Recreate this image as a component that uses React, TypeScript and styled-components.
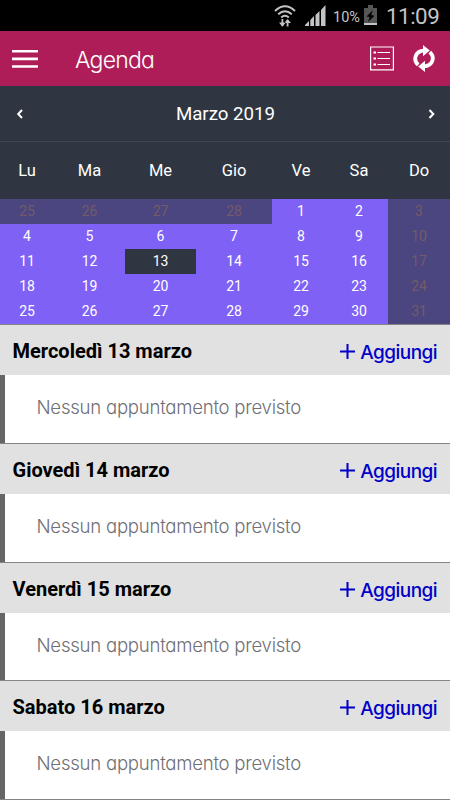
import React from "react";
import styled, { createGlobalStyle } from "styled-components";

const Global = createGlobalStyle`
  * { box-sizing: border-box; }
  body { margin: 0; background: #fff; font-family: Roboto, "Liberation Sans", sans-serif; }
`;

const rounded = `
  font-family: Inter, "Liberation Sans", sans-serif;
  font-feature-settings: "cv11" 1;
`;

const Screen = styled.main`
  width: 450px;
  height: 800px;
  overflow: hidden;
  display: flex;
  flex-direction: column;
`;

const StatusBar = styled.div`
  height: 31px;
  flex: none;
  background: #000;
  color: #c4c4c4;
  display: flex;
  justify-content: flex-end;
  align-items: center;
  padding-right: 10px;
  svg { display: block; flex: none; }
`;

const SignalGap = styled.span`
  margin: 0 0 0 9px;
`;

const Battery = styled.span`
  font-size: 14.5px;
  line-height: 31px;
  width: 27px;
  margin: 3px 4px 0 7px;
  white-space: nowrap;
`;

const Clock = styled.span`
  font-size: 22.4px;
  line-height: 31px;
  letter-spacing: -0.5px;
  width: 54px;
  margin: 2px 0 0 9px;
  white-space: nowrap;
`;

const Toolbar = styled.header`
  height: 55px;
  flex: none;
  background: #af1d58;
  color: #fff;
  display: flex;
  align-items: center;
  padding: 0 15px 0 12px;
`;

const IconButton = styled.button<{ $gap?: number }>`
  border: 0;
  padding: 0;
  background: none;
  color: inherit;
  display: block;
  margin-left: ${(p) => p.$gap ?? 0}px;
  svg { display: block; }
`;

const Title = styled.h1`
  ${rounded}
  flex: 1;
  margin: 3px 0 0 37px;
  font-size: 23px;
  line-height: 30px;
  font-weight: 300;
  letter-spacing: -0.8px;
`;

const MonthBar = styled.div`
  height: 56px;
  flex: none;
  background: #2f3641;
  border-bottom: 1px solid #414751;
  color: #fff;
  display: flex;
  justify-content: space-between;
  align-items: center;
  padding: 1px 15px 0 16px;
  font-size: 18.7px;
`;

const Columns = styled.div`
  display: grid;
  flex: none;
  grid-template-columns: 54px 71px 71px 76px 58px 58px 62px;
`;

const WeekRow = styled(Columns)`
  height: 57px;
  background: #2f3641;
  color: #fff;
  font-size: 16.5px;
  line-height: 57px;
  text-align: center;
`;

const DayGrid = styled(Columns)`
  grid-auto-rows: 25px;
  background: #7f61f6;
`;

type Kind = "open" | "off" | "selected";

const Day = styled.div<{ $kind: Kind }>`
  background: ${(p) => (p.$kind === "off" ? "#4b467f" : p.$kind === "selected" ? "#2f3641" : "#7f61f6")};
  color: ${(p) => (p.$kind === "off" ? "#755a69" : "#fff")};
  font-size: 14px;
  line-height: 25px;
  text-align: center;
`;

const Agenda = styled.div`
  display: grid;
  flex: none;
  grid-template-rows: 119px 119px 118px 119px;
  border-bottom: 1px solid #858585;
`;

const Section = styled.section`
  display: flex;
  flex-direction: column;
  border-top: 1px solid #858585;
`;

const SectionHead = styled.div`
  height: 50px;
  flex: none;
  background: #e1e1e1;
  display: flex;
  justify-content: space-between;
  align-items: center;
  padding: 0 13px 0 12.5px;
`;

const DateTitle = styled.h2`
  margin: 1px 0 0;
  font-size: 20px;
  line-height: 24px;
  font-weight: 700;
  color: #000;
`;

const AddButton = styled.button`
  ${rounded}
  border: 0;
  padding: 5px 0 0;
  background: none;
  display: flex;
  align-items: center;
  color: #0000c8;
  font-size: 19px;
  line-height: 24px;
  letter-spacing: -0.55px;
  font-weight: 500;
  svg { margin: -3px 5px 0 0; }
`;

const SectionBody = styled.div`
  ${rounded}
  flex: 1;
  background: #fff;
  border-left: 5px solid #666;
  padding: 18px 0 0 31.5px;
  color: #707076;
  font-size: 18.6px;
  line-height: 28px;
  letter-spacing: -0.25px;
  font-weight: 300;
`;

const WifiIcon = () => (
  <svg width="22" height="24" viewBox="0 0 22 24" fill="none" stroke="#c4c4c4" strokeWidth="2">
    <path d="M1 7Q11 -2.5 21 7M4.2 10.3Q11 4.3 17.8 10.3M7.2 13.4Q11 10 14.8 13.4" />
    <path d="M8.4 15v7M13.6 22.5v-6" strokeWidth="1.8" />
    <path d="M5 18.5h6.8l-3.4 4.2zM10.2 19h6.8l-3.4-4z" fill="#c4c4c4" stroke="none" />
  </svg>
);

const SignalIcon = () => (
  <svg width="21" height="21" viewBox="0 0 21 21" fill="#c4c4c4">
    <path d="M0 21v-1l4-4v5zM5.3 21v-6l3.7-4v10zM10.5 21v-11l4-4v15zM16 21v-16l4.5-5v21z" />
  </svg>
);

const BatteryIcon = () => (
  <svg width="13" height="21" viewBox="0 0 13 21">
    <path d="M4 0h5v3h4v17H0V3h4z" fill="#555" />
    <path d="M0 18h13v2H0z" fill="#c4c4c4" />
    <path d="M9 5L2.5 11.5l3.2.6L4 17l6.5-6.2-3.3-.8z" fill="#000" />
  </svg>
);

const MenuIcon = () => (
  <svg width="26" height="20" viewBox="0 0 26 20" fill="#fff">
    <path d="M0 1h26v2.6H0zM0 8.6h26v2.6H0zM0 16.2h26v2.6H0z" />
  </svg>
);

const ListIcon = () => (
  <svg width="24" height="25" viewBox="0 0 24 25" fill="none" stroke="#fff">
    <path d="M.6 1h22.8v22.8H.6z" strokeWidth="1.2" />
    <path d="M7.5 6.5h12.5M7.5 12.5h12.5M7.5 18.5h12.5" />
    <path d="M3.5 6.5h2.5M3.5 12.5h2.5M3.5 18.5h2.5" strokeWidth="2" />
  </svg>
);

const SyncIcon = () => (
  <svg width="22" height="27" viewBox="0 0 22 27">
    <path d="M5.2 19.8C-.2 15 2 6 11 5.6M16.8 7.2C22.2 12 20 21 11 21.4" fill="none" stroke="#fff" strokeWidth="3.8" />
    <path d="M10 0L16.8 5.6 10 11.2zM12 27L5.2 21.4 12 15.8z" fill="#fff" />
  </svg>
);

const Chevron = ({ flip = false }: { flip?: boolean }) => (
  <svg width="7" height="10" viewBox="0 0 7 10" fill="none" stroke="#fff" strokeWidth="2">
    <path d={flip ? "M1.5 1L5.3 5 1.5 9" : "M6 1L2.2 5 6 9"} />
  </svg>
);

const PlusIcon = () => (
  <svg width="15" height="15" viewBox="0 0 15 15" stroke="#0000c8" strokeWidth="2">
    <path d="M0 7.5h15M7.5 0v15" />
  </svg>
);

const weekdays = ["Lu", "Ma", "Me", "Gio", "Ve", "Sa", "Do"];
const weeks = [
  [25, 26, 27, 28, 1, 2, 3],
  [4, 5, 6, 7, 8, 9, 10],
  [11, 12, 13, 14, 15, 16, 17],
  [18, 19, 20, 21, 22, 23, 24],
  [25, 26, 27, 28, 29, 30, 31],
];
const dates = ["Mercoledì 13 marzo", "Giovedì 14 marzo", "Venerdì 15 marzo", "Sabato 16 marzo"];

const kindOf = (week: number, column: number, day: number): Kind => {
  if (column === 6 || (week === 0 && day > 20)) return "off";
  return day === 13 ? "selected" : "open";
};

export default function App() {
  return (
    <Screen>
      <Global />
      <StatusBar>
        <WifiIcon />
        <SignalGap><SignalIcon /></SignalGap>
        <Battery>10%</Battery>
        <BatteryIcon />
        <Clock>11:09</Clock>
      </StatusBar>
      <Toolbar>
        <IconButton aria-label="Menu"><MenuIcon /></IconButton>
        <Title>Agenda</Title>
        <IconButton aria-label="Elenco"><ListIcon /></IconButton>
        <IconButton aria-label="Aggiorna" $gap={19}><SyncIcon /></IconButton>
      </Toolbar>
      <MonthBar>
        <IconButton aria-label="Mese precedente"><Chevron /></IconButton>
        <span>Marzo 2019</span>
        <IconButton aria-label="Mese successivo"><Chevron flip /></IconButton>
      </MonthBar>
      <WeekRow>{weekdays.map((d) => <span key={d}>{d}</span>)}</WeekRow>
      <DayGrid>
        {weeks.map((week, w) =>
          week.map((day, c) => (
            <Day key={`${w}-${c}`} $kind={kindOf(w, c, day)}>{day}</Day>
          ))
        )}
      </DayGrid>
      <Agenda>
        {dates.map((date) => (
          <Section key={date}>
            <SectionHead>
              <DateTitle>{date}</DateTitle>
              <AddButton><PlusIcon />Aggiungi</AddButton>
            </SectionHead>
            <SectionBody>Nessun appuntamento previsto</SectionBody>
          </Section>
        ))}
      </Agenda>
    </Screen>
  );
}
